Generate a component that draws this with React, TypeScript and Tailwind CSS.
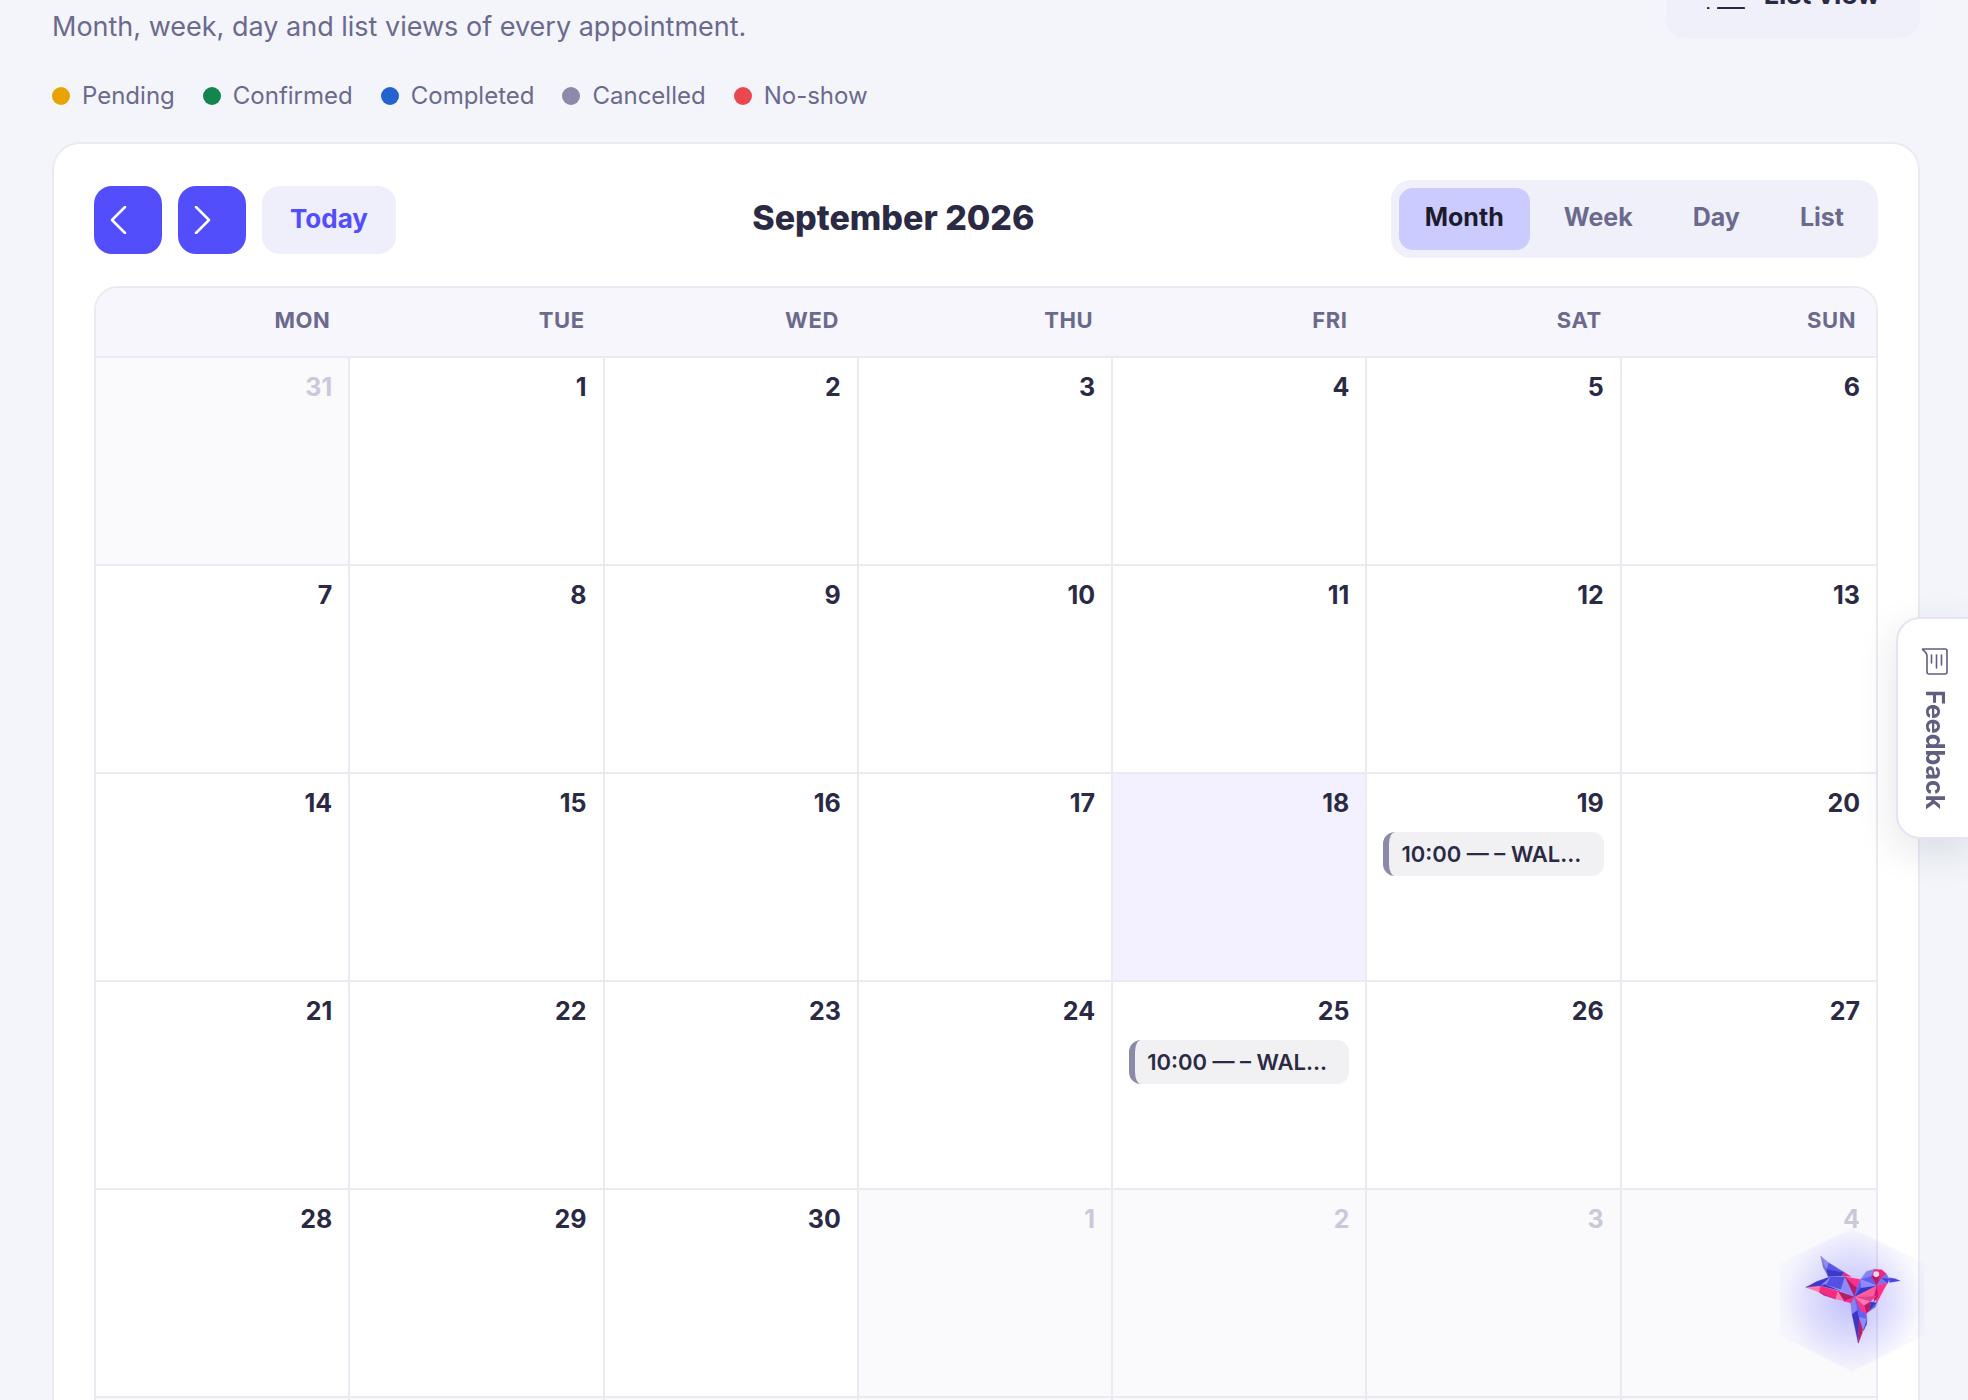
import React, { useState } from 'react';
import clsx from 'clsx';

type CalendarEvent = { label: string };
type Day = { date: number; outside?: boolean; today?: boolean; event?: CalendarEvent };

const LEGEND = [
    { label: 'Pending', dot: 'bg-[#e8a300]' },
    { label: 'Confirmed', dot: 'bg-[#12864c]' },
    { label: 'Completed', dot: 'bg-[#2463cf]' },
    { label: 'Cancelled', dot: 'bg-[#8b8aa8]' },
    { label: 'No-show', dot: 'bg-[#e8484e]' },
];

const WEEKDAYS = ['Mon', 'Tue', 'Wed', 'Thu', 'Fri', 'Sat', 'Sun'];
const VIEWS = ['Month', 'Week', 'Day', 'List'];
const CANCELLED: CalendarEvent = { label: '10:00 — – WALK-IN' };

// September 2026, six weeks starting on Monday 31 August
const buildWeeks = (): Day[][] => {
    const days: Day[] = Array.from({ length: 42 }, (_, i) => {
        if (i === 0) return { date: 31, outside: true };
        if (i > 30) return { date: i - 30, outside: true };
        return { date: i, today: i === 18, event: i === 19 || i === 25 ? CANCELLED : undefined };
    });
    return Array.from({ length: 6 }, (_, w) => days.slice(w * 7, w * 7 + 7));
};

const App = () => {
    const [view, setView] = useState('Month');

    return (
        <div className="h-screen overflow-hidden bg-[#f3f5fb] pl-[52px] pr-12 font-['Inter',sans-serif] text-[#2b2a45]">
            {/* Page header */}
            <header className="flex items-start justify-between h-[72px]">
                <p className="pt-2 text-[27px] leading-[38px] text-[#6b6a8d]">
                    Month, week, day and list views of every appointment.
                </p>
                <button className="-mt-[46px] flex h-[84px] items-center gap-[18px] rounded-[20px] bg-[#f0f0fa] px-10 pb-0.5 text-[27px] font-bold">
                    <ListIcon />
                    <span>List view</span>
                </button>
            </header>

            {/* Status legend */}
            <ul className="flex h-12 items-center gap-7 text-2xl text-[#6b6a8d]">
                {LEGEND.map((item) => (
                    <li key={item.label} className="flex items-center gap-3">
                        <span className={clsx('size-[18px] rounded-full', item.dot)} />
                        {item.label}
                    </li>
                ))}
            </ul>

            <main className="mt-[22px] rounded-[28px] border-2 border-[#ebeaf3] bg-white px-10 pt-9 pb-10">
                {/* Toolbar */}
                <div className="flex items-center justify-between">
                    <div className="flex gap-4 pt-0.5">
                        <NavButton label="Previous month" points="15,1 2,14 15,27" />
                        <NavButton label="Next month" points="2,1 15,14 2,27" />
                        <button className="h-[68px] rounded-[18px] bg-[#efeefb] px-7 pb-1 text-[26px] font-bold text-[#524efb]">
                            Today
                        </button>
                    </div>
                    <h2 className="pb-0.5 text-[34px] font-extrabold leading-10">September 2026</h2>
                    <div className="flex gap-2 rounded-[20px] bg-[#f0f0fa] p-2">
                        {VIEWS.map((name) => (
                            <button
                                key={name}
                                onClick={() => setView(name)}
                                className={clsx(
                                    'h-[62px] rounded-[14px] px-[26px] pb-0.5 text-[25px] font-bold',
                                    view === name ? 'bg-[#cccbff] text-[#1c1b2e]' : 'text-[#6b6a8d]'
                                )}
                            >
                                {name}
                            </button>
                        ))}
                    </div>
                </div>

                {/* Month grid */}
                <div className="mt-7 overflow-hidden rounded-3xl border-2 border-[#ebeaf3]">
                    <table className="w-full table-fixed border-separate border-spacing-0">
                        <thead>
                            <tr className="h-[70px] bg-[#f7f6fc]">
                                {WEEKDAYS.map((day) => (
                                    <th
                                        key={day}
                                        scope="col"
                                        className="border-b-2 border-[#ebeaf3] px-5 pb-1 text-right text-[22px] font-bold uppercase tracking-wide text-[#6b6a8d]"
                                    >
                                        {day}
                                    </th>
                                ))}
                            </tr>
                        </thead>
                        <tbody>
                            {buildWeeks().map((week, w) => (
                                <tr key={w}>
                                    {week.map((day) => (
                                        <DayCell key={day.date} day={day} />
                                    ))}
                                </tr>
                            ))}
                        </tbody>
                    </table>
                </div>
            </main>

            {/* Floating widgets */}
            <button className="fixed -right-0.5 top-[617px] flex items-center gap-3.5 rounded-l-3xl border-2 border-[#e5e4f2] bg-white pt-[29px] pr-[14px] pb-7 pl-[18px] text-[25px] font-bold leading-[38px] text-[#605f80] shadow-[0_12px_40px_rgba(30,30,60,0.12)] [writing-mode:vertical-rl]">
                <FeedbackIcon />
                Feedback
            </button>
            <button aria-label="Open assistant" className="fixed bottom-7 right-11">
                <Hummingbird />
            </button>
        </div>
    );
};

const NavButton = ({ label, points }: { label: string; points: string }) => (
    <button aria-label={label} className="flex size-[68px] items-center rounded-[18px] bg-[#524efb] pl-4 text-white">
        <svg width="17" height="28" viewBox="0 0 17 28" fill="none" stroke="currentColor" strokeWidth="2.5" strokeLinecap="round" strokeLinejoin="round">
            <polyline points={points} />
        </svg>
    </button>
);

const DayCell = ({ day }: { day: Day }) => (
    <td
        className={clsx(
            'h-[208px] border-b-2 border-r-2 border-[#ebeaf3] px-4 pt-3 align-top last:border-r-0',
            day.outside && 'bg-[#fafafd]',
            day.today && 'bg-[#f3f1ff]'
        )}
    >
        <div className={clsx('text-right text-[25px] font-bold leading-[34px]', day.outside && 'text-[#cac9d9]')}>
            {day.date}
        </div>
        {day.event && (
            <a
                href="#event"
                className="mt-3 block truncate rounded-xl border-l-[6px] border-[#8b8aa8] bg-[#f1f1f4] px-3 text-[22px] font-semibold leading-[44px]"
            >
                {day.event.label}
            </a>
        )}
    </td>
);

const ListIcon = () => (
    <svg width="40" height="28" viewBox="0 0 40 28" fill="none" stroke="currentColor" strokeWidth="2.2" strokeLinecap="round">
        <path d="M2 5h.5M2 16h.5M2 27h.5M12 5h26M12 16h26M12 27h26" />
    </svg>
);

const FeedbackIcon = () => (
    <svg width="28" height="28" viewBox="0 0 28 28" fill="none" stroke="currentColor" strokeWidth="1.6" strokeLinecap="round" strokeLinejoin="round">
        <path d="M2 1h22q2 0 2 2v21q0 2-2 2H8q-2 0-2-2V8Q6 5 2 2q-1-1 0-1z" />
        <path d="M10.500 7v8M15.500 7v13M20.500 7v10" />
    </svg>
);

// Low-poly bird over a soft hexagon
const FACETS: [string, string][] = [
    ['181,229 205,249 198,268', '#8f8bf2'],
    ['181,229 198,268 203,290 188,262', '#7673d6'],
    ['205,249 252,278 198,268', '#5a56e8'],
    ['198,268 252,278 244,289 203,290', '#3d38c9'],
    ['252,278 272,290 244,289', '#e92a80'],
    ['136,323 168,306 210,291 194,314', '#8682f0'],
    ['136,323 194,314 180,319', '#3d38c9'],
    ['210,291 254,291 250,332 194,314', '#5550df'],
    ['168,306 210,291 180,319 136,323', '#3d38c9'],
    ['180,319 210,291 196,318', '#8682f0'],
    ['180,319 194,314 240,333', '#3a37c6'],
    ['254,291 283,352 240,333', '#8f8bff'],
    ['254,291 301,299 290,325', '#ff2f8b'],
    ['254,291 290,325 283,352', '#b81c69'],
    ['301,299 303,324 283,352 290,325', '#625cf5'],
    ['136,323 180,319 176,337', '#ff77ab'],
    ['176,337 180,319 233,334 226,358', '#f52c82'],
    ['176,337 226,358 190,347', '#b81c69'],
    ['233,334 252,365 226,358', '#ff77ab'],
    ['233,334 283,352 252,365', '#b81c69'],
    ['283,352 275,371 252,365', '#f52c82'],
    ['301,299 318,275 342,268 334,289', '#8783ef'],
    ['301,299 334,289 350,318', '#625cf5'],
    ['301,299 350,318 303,324', '#8f8bff'],
    ['342,268 365,270 379,283 365,295 350,318 334,289', '#e92a80'],
    ['334,289 358,289 350,318', '#b81c69'],
    ['350,318 365,295 379,283 387,298 382,310', '#7773ee'],
    ['365,295 387,298 382,310', '#4541d9'],
    ['387,294 405,297 420,303 388,308', '#4a46df'],
    ['301,325 350,318 283,352', '#3a35c9'],
    ['350,318 340,348 283,352', '#ff5a9b'],
    ['350,318 382,310 370,331 350,369 340,348', '#ff2f8b'],
    ['350,318 353,350 340,368', '#b81c69'],
    ['283,352 350,348 330,366', '#e63e8c'],
    ['330,366 350,369 329,393', '#3d38c9'],
    ['283,352 330,366 311,378', '#ff77ab'],
    ['311,378 330,366 329,393 318,402', '#b81c69'],
    ['283,352 311,378 318,402 310,417', '#ff2f8b'],
    ['283,352 292,391 275,404 271,372', '#8682f0'],
    ['283,352 310,417 292,391', '#5a56ef'],
    ['350,369 345,383 329,393', '#6661ee'],
    ['275,404 292,391 297,414 294,491', '#3b37c4'],
    ['292,391 318,402 320,419 297,414', '#6661ee'],
    ['297,414 309,440 306,460 294,491', '#c01c69'],
    ['297,414 320,419 309,454 305,440', '#8f8bff'],
    ['320,419 319,435 309,454', '#4541d9'],
];

const Hummingbird = () => (
    <svg width="144" height="144" viewBox="58 145 434 432">
        <defs>
            <radialGradient id="glow" gradientUnits="userSpaceOnUse" cx="275" cy="360" r="240">
                <stop offset="0" stopColor="#524efb" stopOpacity="0.34" />
                <stop offset="0.5" stopColor="#524efb" stopOpacity="0.17" />
                <stop offset="0.85" stopColor="#524efb" stopOpacity="0.04" />
                <stop offset="1" stopColor="#524efb" stopOpacity="0.02" />
            </radialGradient>
        </defs>
        <polygon points="275,145 492,250 492,468 275,577 58,468 58,250" fill="url(#glow)" />
        {FACETS.map(([points, fill]) => (
            <polygon key={points} points={points} fill={fill} stroke={fill} strokeWidth="1" strokeLinejoin="round" />
        ))}
        <circle cx="348" cy="283" r="9" fill="#dcdcee" />
    </svg>
);

export default App;
